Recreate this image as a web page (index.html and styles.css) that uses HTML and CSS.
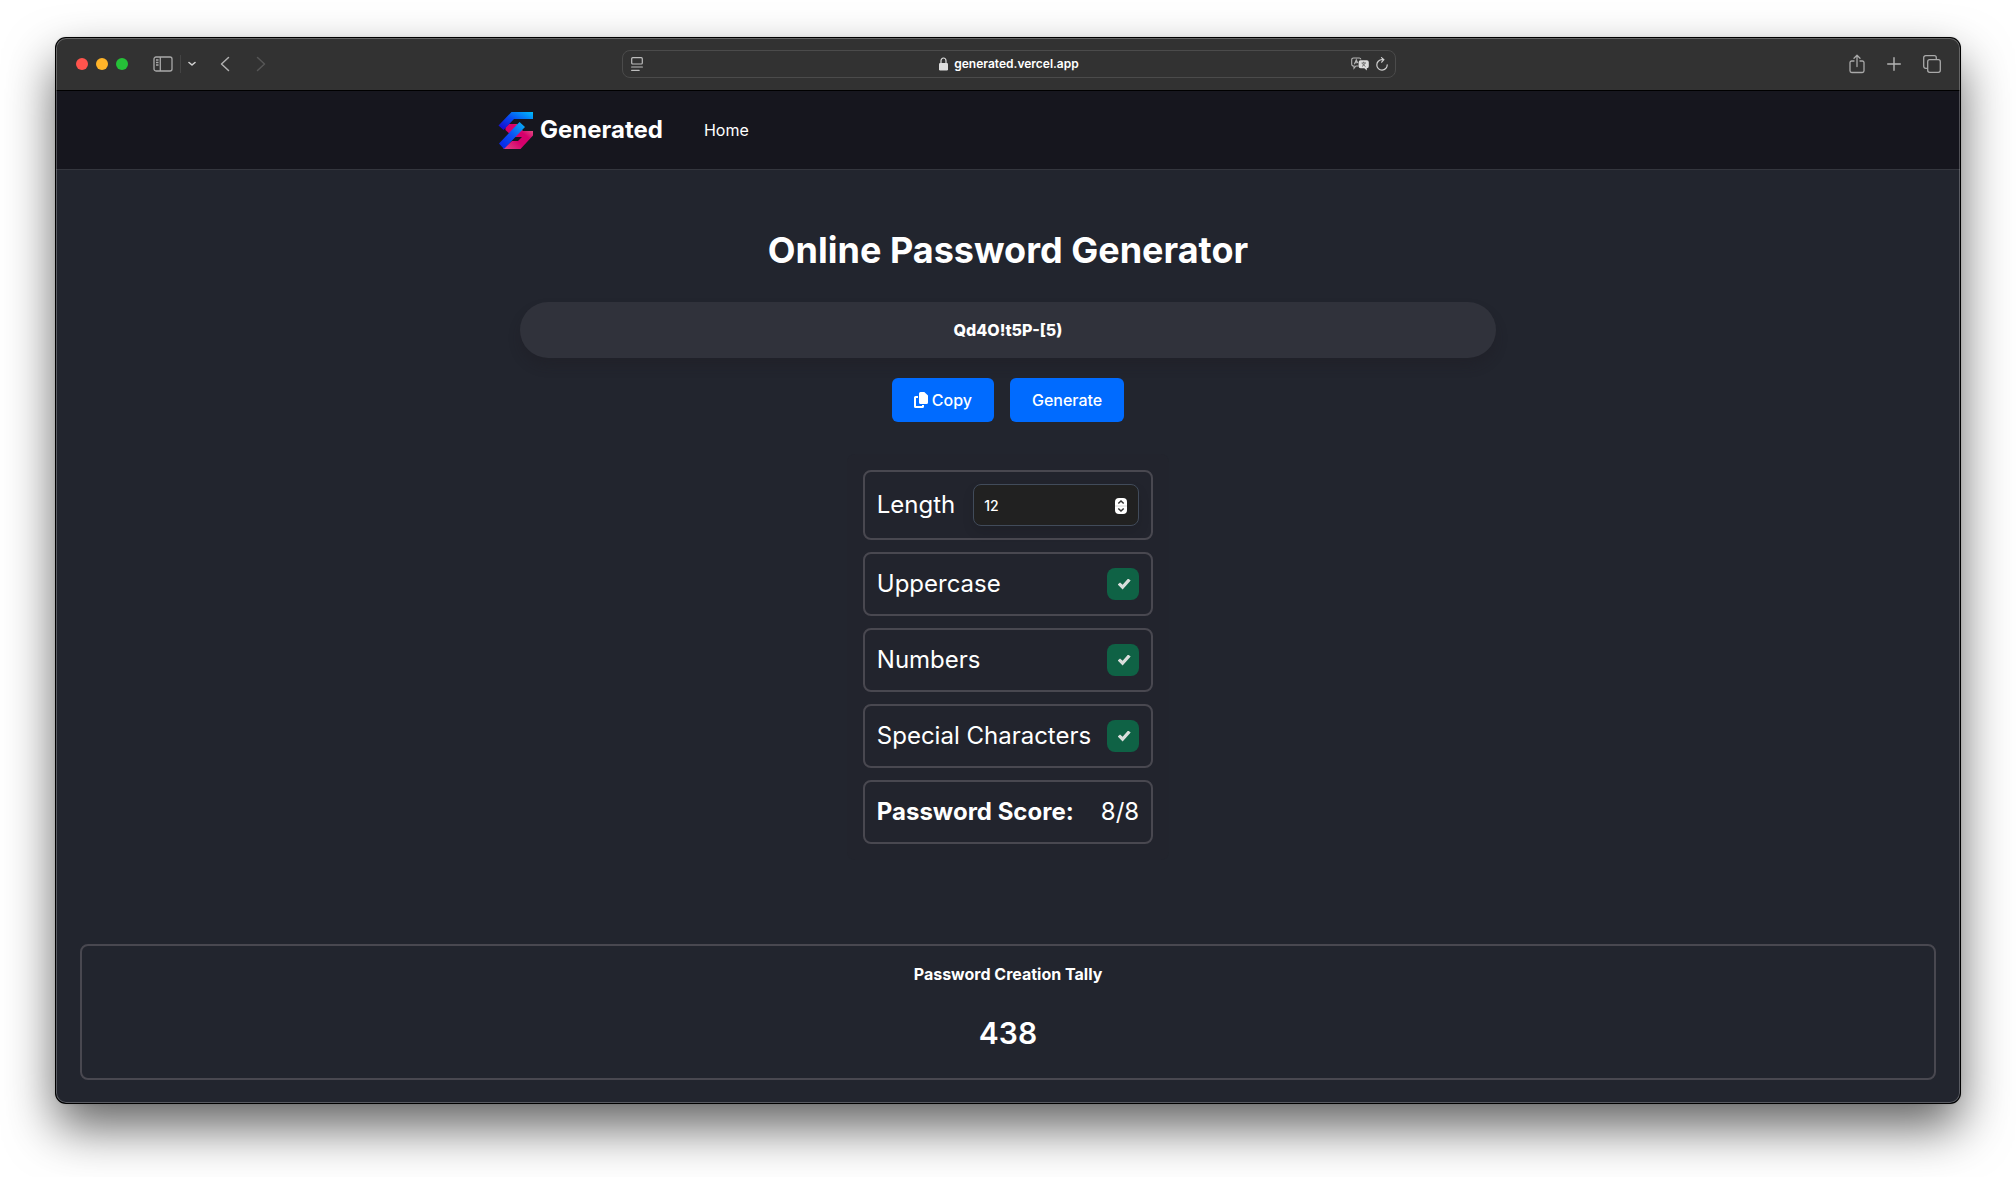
FILE: index.html
```html
<!DOCTYPE html>
<html lang="en">
<head>
<meta charset="utf-8">
<meta name="viewport" content="width=device-width, initial-scale=1">
<title>Generated</title>
<link rel="stylesheet" href="styles.css">
</head>
<body>
<div class="window">
  <div class="toolbar">
    <div class="toolbar-left">
      <div class="lights"><span class="light red"></span><span class="light yellow"></span><span class="light green"></span></div>
      <button class="tool sidebar-tool" aria-label="Sidebar">
        <svg width="20" height="16" viewBox="0 0 20 16" fill="none" stroke="#a9a9a9" stroke-width="1.3"><rect x="1" y="1" width="18" height="14" rx="2"/><path d="M7.300 1v14M3 4h2.500M3 6.500h2.500M3 9h2.500"/></svg>
      </button>
      <span class="divider"></span>
      <button class="tool menu-tool" aria-label="Tab groups">
        <svg width="8" height="6" viewBox="0 0 8 6" fill="none" stroke="#d0d0d0" stroke-width="1.600" stroke-linecap="round" stroke-linejoin="round"><path d="M1 1.500l3 2.500 3-2.500"/></svg>
      </button>
      <button class="tool back-tool" aria-label="Back">
        <svg width="10" height="16" viewBox="0 0 10 16" fill="none" stroke="#b0b0b0" stroke-width="1.500" stroke-linecap="round" stroke-linejoin="round"><path d="M8.500 1.500L1.500 8l7 6.500"/></svg>
      </button>
      <button class="tool" aria-label="Forward">
        <svg width="10" height="16" viewBox="0 0 10 16" fill="none" stroke="#565656" stroke-width="1.500" stroke-linecap="round" stroke-linejoin="round"><path d="M1.500 1.500l7 6.500-7 6.500"/></svg>
      </button>
    </div>
    <div class="address">
      <button class="tool" aria-label="Reader">
        <svg width="12" height="14" viewBox="0 0 12 14" fill="none" stroke="#bdbdbd" stroke-width="1.200" stroke-linecap="round"><rect x=".7" y=".7" width="10.600" height="6.300" rx="1"/><path d="M.6 10h10.800M.6 13.300h7.600"/></svg>
      </button>
      <div class="site">
        <svg width="9" height="14" viewBox="0 0 9 14"><path d="M2 7V3.800a2.500 2.800 0 0 1 5 0V7" fill="none" stroke="#dedede" stroke-width="1.200"/><rect y="6" width="9" height="7.500" rx="1.200" fill="#dedede"/></svg>
        <span>generated.vercel.app</span>
      </div>
      <div class="address-tools">
        <button class="tool" aria-label="Translate">
          <svg width="18" height="14" viewBox="0 0 18 14"><path d="M7.500 9H5l-2 2.300V9h-.6A1.700 1.700 0 0 1 .7 7.300V2.700A1.700 1.700 0 0 1 2.400 1h5.800a1.700 1.700 0 0 1 1.700 1.300M3.300 7.300L5.300 2.800l1.500 3.200M4 5.800h2.400" fill="none" stroke="#b5b5b5" stroke-width="1.100"/><path d="M9.600 3.300h6.200a2 2 0 0 1 2 2v3.900a2 2 0 0 1-2 2V13.500l-2.400-2.300H9.600a2 2 0 0 1-2-2V5.300a2 2 0 0 1 2-2z" fill="#dcdcdc"/><path d="M10.500 6h4.400M12.700 4.700V6M11 9.500l3.400-3.300M11.200 6.600l3.300 3" fill="none" stroke="#555" stroke-width=".8"/></svg>
        </button>
        <button class="tool" aria-label="Reload">
          <svg width="12" height="14" viewBox="0 0 12 14" fill="none" stroke="#cfcfcf" stroke-width="1.200" stroke-linecap="round" stroke-linejoin="round"><path d="M11.200 7.800A5.200 5.200 0 1 1 6 2.700h1.800M5.500.6l2.400 2.100-2.200 2.500"/></svg>
        </button>
      </div>
    </div>
    <div class="toolbar-right">
      <button class="tool" aria-label="Share">
        <svg width="16" height="20" viewBox="0 0 16 20" fill="none" stroke="#a9a9a9" stroke-width="1.300" stroke-linecap="round" stroke-linejoin="round"><path d="M5 7H2.700A1.700 1.700 0 0 0 1 8.700v8.100a1.700 1.700 0 0 0 1.700 1.700h10.600a1.700 1.700 0 0 0 1.700-1.700V8.700A1.700 1.700 0 0 0 13.300 7H11M8 12.500V1.500M5 4.300l3-3 3 3"/></svg>
      </button>
      <button class="tool" aria-label="New tab">
        <svg width="14" height="14" viewBox="0 0 14 14" fill="none" stroke="#b5b5b5" stroke-width="1.400" stroke-linecap="round"><path d="M7 .7v12.600M.7 7h12.600"/></svg>
      </button>
      <button class="tool" aria-label="Tab overview">
        <svg width="18" height="18" viewBox="0 0 18 18" fill="none" stroke="#a9a9a9" stroke-width="1.300"><rect x="4.700" y="4.700" width="12.600" height="12.600" rx="2"/><path d="M4.700 13.300H2.700a2 2 0 0 1-2-2V2.700a2 2 0 0 1 2-2h8.600a2 2 0 0 1 2 2v2"/></svg>
      </button>
    </div>
  </div>

  <header class="site-header">
    <nav class="nav">
      <a class="brand" href="#">
        <svg width="36" height="38" viewBox="0 0 36 38">
          <defs>
            <linearGradient id="blue-top" x1="0" y1="1" x2="1" y2="0"><stop offset="0" stop-color="#1a00c8"/><stop offset=".5" stop-color="#0748f0"/><stop offset="1" stop-color="#00bcf8"/></linearGradient>
            <linearGradient id="blue-bar" x1="0" y1="1" x2="1" y2="0"><stop offset="0" stop-color="#0a1ee0"/><stop offset=".5" stop-color="#0a50f4"/><stop offset="1" stop-color="#06b8f4"/></linearGradient>
            <linearGradient id="pink" x1="0" y1="1" x2="1" y2="0"><stop offset="0" stop-color="#e04a86"/><stop offset=".4" stop-color="#d6006c"/><stop offset=".65" stop-color="#d6006c"/><stop offset="1" stop-color="#e88090"/></linearGradient>
          </defs>
          <path d="M11 13h8l6 7h10v4.500L22.500 38H5l9-8h6l4-4H15L7.500 19V16z" fill="url(#pink)"/>
          <path d="M13.500 1H35v7H16L5.500 19 .5 14.500z" fill="url(#blue-top)"/>
          <path d="M21.500 11l5.500 5L6 38 1 32.500z" fill="url(#blue-bar)"/>
        </svg>
        <span>Generated</span>
      </a>
      <a class="nav-link" href="#">Home</a>
    </nav>
  </header>

  <main class="page">
    <h1 class="title">Online Password Generator</h1>
    <output class="password">Qd4O!t5P-[5)</output>
    <div class="actions">
      <button class="button">
        <svg width="14" height="16" viewBox="0 0 14 16" fill="#fff"><path d="M6.500 0h3.800L14 3.600v6.900a1.500 1.500 0 0 1-1.500 1.500h-6A1.500 1.500 0 0 1 5 10.500v-9A1.500 1.500 0 0 1 6.500 0z"/><path d="M1.500 4H4v2H2v8h6v-1h2v1.500A1.500 1.500 0 0 1 8.500 16h-7A1.500 1.500 0 0 1 0 14.500v-9A1.500 1.500 0 0 1 1.500 4z"/></svg>
        Copy
      </button>
      <button class="button">Generate</button>
    </div>
    <form class="options">
      <div class="option">
        <label for="length">Length</label>
        <div class="number">
          <input id="length" type="number" value="12">
          <svg class="stepper" width="12" height="16" viewBox="0 0 12 16"><rect width="12" height="16" rx="4" fill="#fff"/><path d="M0 8h12" stroke="#d8d8d8"/><path d="M3.300 5.500L6 3l2.700 2.500M3.300 10.500L6 13l2.700-2.500" fill="none" stroke="#333" stroke-width="1.500"/></svg>
        </div>
      </div>
      <div class="option">
        <label for="uppercase">Uppercase</label>
        <input class="check" id="uppercase" type="checkbox" checked>
      </div>
      <div class="option">
        <label for="numbers">Numbers</label>
        <input class="check" id="numbers" type="checkbox" checked>
      </div>
      <div class="option">
        <label for="special">Special Characters</label>
        <input class="check" id="special" type="checkbox" checked>
      </div>
      <div class="option">
        <strong>Password Score:</strong>
        <span>8/8</span>
      </div>
    </form>
  </main>

  <section class="tally">
    <h2 class="tally-title">Password Creation Tally</h2>
    <p class="tally-count">438</p>
  </section>
</div>
</body>
</html>
```
FILE: styles.css
```css
* {
  box-sizing: border-box;
}

body {
  margin: 0;
  min-height: 100vh;
  padding: 38px 56px 74px;
  display: flex;
  flex-direction: column;
  background: #fff;
  color: #fff;
  font-family: Inter, "Liberation Sans", sans-serif;
  font-size: 16px;
  line-height: 24px;
}

h1, h2, p {
  margin: 0;
}

a {
  color: inherit;
  text-decoration: none;
}

button, input {
  font: inherit;
  color: inherit;
}

svg {
  display: block;
  flex: none;
}

.window {
  position: relative;
  flex: 1;
  display: flex;
  flex-direction: column;
  border-radius: 10px;
  background: #22252e;
  overflow: hidden;
  box-shadow: 0 0 0 1px #000, 0 24px 50px rgba(0, 0, 0, .62), 0 0 3px rgba(0, 0, 0, .3);
}

/* light rim drawn over the window's edge */
.window::after {
  content: "";
  position: absolute;
  inset: 0;
  border-radius: 10px;
  box-shadow: inset 0 0 0 1px rgba(255, 255, 255, .25);
  pointer-events: none;
}

.toolbar {
  display: grid;
  grid-template-columns: 1fr minmax(0, 774px) 1fr;
  align-items: center;
  height: 53px;
  padding: 0 19px 0 20px;
  background: #323232;
  border-bottom: 1px solid #000;
}

.toolbar-left, .toolbar-right, .lights, .address, .site, .address-tools {
  display: flex;
  align-items: center;
}

.toolbar-left, .toolbar-right {
  padding-bottom: 1px;
}

.toolbar-right {
  justify-content: flex-end;
  gap: 22px;
}

.lights {
  gap: 8px;
}

.light {
  width: 12px;
  height: 12px;
  border-radius: 50%;
}

.red { background: #ff544d; }
.yellow { background: #ffb429; }
.green { background: #25c138; }

.tool {
  padding: 0;
  border: 0;
  background: none;
}

.sidebar-tool {
  margin-left: 25px;
}

.divider {
  width: 1px;
  height: 18px;
  margin: 0 7px;
  background: #444;
}

.back-tool {
  margin: 0 26px 0 24px;
}

.address {
  justify-content: space-between;
  height: 28px;
  padding: 0 6px 0 8px;
  border: 1px solid #4b4b4b;
  border-radius: 8px;
}

.site {
  gap: 6px;
  margin-left: 24px;
  font-size: 12px;
  font-weight: 600;
}

.address-tools {
  gap: 7px;
}

.site-header {
  background: #16161e;
  border-bottom: 1px solid #34363e;
}

.nav {
  display: flex;
  align-items: center;
  gap: 41px;
  max-width: 1024px;
  height: 78px;
  margin: 0 auto;
  padding: 0 2px;
}

.brand {
  display: flex;
  align-items: center;
  gap: 6px;
  font-size: 24px;
  font-weight: 700;
}

.page {
  display: flex;
  flex-direction: column;
  align-items: center;
  width: 100%;
  max-width: 1024px;
  margin: 0 auto;
  padding: 60px 24px 84px;
}

.title {
  font-size: 36px;
  line-height: 40px;
  font-weight: 700;
}

.password {
  width: 100%;
  margin-top: 32px;
  padding: 16px;
  border-radius: 28px;
  background: #30323b;
  box-shadow: 0 8px 12px rgba(30, 26, 34, .3);
  font-weight: 800;
  text-align: center;
}

.actions {
  display: flex;
  gap: 16px;
  margin-top: 20px;
}

.button {
  display: flex;
  align-items: center;
  gap: 4px;
  padding: 10px 22px;
  border: 0;
  border-radius: 6px;
  background: #006bff;
  font-weight: 500;
}

.options {
  display: flex;
  flex-direction: column;
  gap: 12px;
  margin-top: 32px;
  padding: 16px;
  border-radius: 8px;
  background: #22242d;
  font-size: 24px;
  line-height: 32px;
}

.option {
  display: flex;
  align-items: center;
  justify-content: space-between;
  gap: 16px;
  min-height: 64px;
  padding: 12px;
  border: 2px solid #494850;
  border-radius: 8px;
}

.number {
  position: relative;
  width: 166px;
}

.number input {
  display: block;
  width: 100%;
  height: 42px;
  padding: 0 10px;
  border: 1px solid #414b5a;
  border-radius: 8px;
  background: #212121;
  box-shadow: 0 6px 12px rgba(0, 0, 0, .1);
  font-size: 14px;
  line-height: 20px;
  font-weight: 500;
  appearance: textfield;
}

.stepper {
  position: absolute;
  top: 14px;
  right: 12px;
}

.check {
  appearance: none;
  display: grid;
  place-items: center;
  flex: none;
  width: 32px;
  height: 32px;
  margin: 0;
  padding-left: 2px;
  border-radius: 8px;
  background: #0f6245;
}

.check:checked::before {
  content: "";
  width: 13px;
  height: 11px;
  background: #d9dedc;
  clip-path: polygon(0 55%, 18% 36%, 38% 56%, 80% 0, 100% 18%, 38% 100%);
}

.tally {
  margin: 0 24px 23px;
  padding: 16px 16px 25px;
  border: 2px solid #494850;
  border-radius: 8px;
  text-align: center;
}

.tally-title {
  font-size: 16px;
  line-height: 24px;
  font-weight: 700;
}

.tally-count {
  margin-top: 27px;
  font-size: 30px;
  line-height: 40px;
  font-weight: 600;
}
```
